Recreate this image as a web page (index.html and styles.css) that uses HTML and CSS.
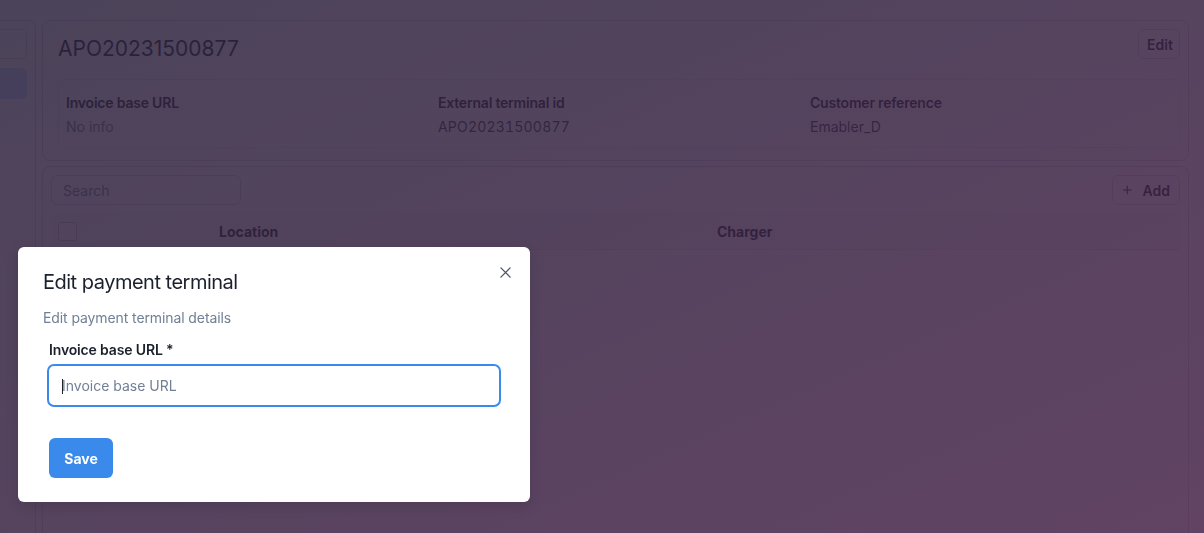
FILE: index.html
```html
<!DOCTYPE html>
<html lang="en">
<head>
<meta charset="utf-8">
<title>Edit payment terminal</title>
<link rel="stylesheet" href="styles.css">
</head>
<body>
<div class="page">
  <aside class="sidebar">
    <div class="side-item"></div>
    <div class="side-item active"></div>
  </aside>
  <main class="main">
    <section class="card details">
      <div class="card-head">
        <h1 class="title">APO20231500877</h1>
        <button class="btn-outline edit">Edit</button>
      </div>
      <dl class="fields">
        <div class="field"><dt>Invoice base URL</dt><dd class="muted">No info</dd></div>
        <div class="field"><dt>External terminal id</dt><dd class="num">APO20231500877</dd></div>
        <div class="field"><dt>Customer reference</dt><dd>Emabler_D</dd></div>
      </dl>
    </section>
    <section class="card list">
      <div class="toolbar">
        <input class="search" type="text" placeholder="Search">
        <button class="btn-outline add">
          <svg class="plus" viewBox="0 0 12 12" width="12" height="12"><path d="M6 0.5v11M0.5 6h11" stroke="currentColor" stroke-width="1.4" fill="none" stroke-linecap="round"/></svg>
          <span>Add</span>
        </button>
      </div>
      <div class="thead">
        <span class="th-check"><span class="checkbox"></span></span>
        <span class="th">Location</span>
        <span class="th">Charger</span>
      </div>
    </section>
  </main>
</div>
<div class="overlay"></div>
<div class="modal" role="dialog">
  <button class="close" aria-label="Close">
    <svg viewBox="0 0 12 12" width="12" height="12"><path d="M1 1l10 10M11 1L1 11" stroke="currentColor" stroke-width="1.4" fill="none" stroke-linecap="round"/></svg>
  </button>
  <h2 class="modal-title">Edit payment terminal</h2>
  <p class="modal-desc">Edit payment terminal details</p>
  <form class="form">
    <label class="label" for="url">Invoice base URL *</label>
    <div class="input-wrap">
      <input id="url" class="input" type="text" placeholder="Invoice base URL">
    </div>
    <button type="button" class="save">Save</button>
  </form>
</div>
</body>
</html>
```
FILE: styles.css
```css
* { box-sizing: border-box; }
html, body {
  margin: 0;
  width: 1204px;
  height: 533px;
  overflow: hidden;
  background: #ffffff;
  font-family: Inter, "Liberation Sans", sans-serif;
  color: #1a202c;
}
button, input { font-family: inherit; }

.page {
  display: flex;
  padding: 20px 15px 0 0;
  height: 533px;
  overflow: hidden;
}

.sidebar {
  width: 46px;
  margin-left: -10px;
  border: 1px solid #d3d8e0;
  border-bottom: none;
  border-radius: 8px 8px 0 0;
  padding: 8px 8px 0 0;
  display: flex;
  flex-direction: column;
  gap: 9px;
  flex-shrink: 0;
}
.side-item {
  height: 30px;
  border: 1px solid #d3d8e0;
  border-radius: 6px;
}
.side-item.active {
  height: 31px;
  border: none;
  background: #c9dcfb;
}

.main {
  flex: 1;
  min-width: 0;
  margin-left: 6px;
  display: flex;
  flex-direction: column;
  gap: 5px;
}

.card {
  border: 1px solid #d3d8e0;
  border-radius: 8px;
  background: #fff;
  padding: 8px;
}
.details { height: 141px; }
.list {
  flex: 1;
  border-bottom: none;
  border-radius: 8px 8px 0 0;
}

.card-head {
  display: flex;
  justify-content: space-between;
  align-items: flex-start;
}
.title {
  margin: 0;
  padding-left: 7px;
  font-size: 21px;
  line-height: 40px;
  font-weight: 400;
  color: #1a202c;
}
.btn-outline {
  height: 30px;
  border: 1px solid #d3d8e0;
  border-radius: 6px;
  background: #fff;
  font-size: 14px;
  font-weight: 600;
  color: #1a202c;
  display: inline-flex;
  align-items: center;
}
.edit { width: 42px; padding: 0 6px 0 8px; justify-content: center; }
.add { width: 68px; padding: 0 9px 0 10px; gap: 11px; }
.plus { display: block; }

.fields {
  margin: 10px 0 0 7px;
  height: 69px;
  border: 1px solid #eceef3;
  border-radius: 6px;
  padding: 12px 0 0 7px;
  display: grid;
  grid-template-columns: repeat(3, 372px);
  align-content: start;
}
.field dt {
  font-size: 14px;
  line-height: 22px;
  font-weight: 600;
  letter-spacing: -0.2px;
  color: #1a202c;
}
.field dd {
  margin: 2px 0 0;
  font-size: 14px;
  line-height: 22px;
  color: #2d3748;
}
.field dd.muted { color: #718096; }
.field dd.num { font-variant-numeric: tabular-nums; letter-spacing: 0.2px; }

.toolbar {
  display: flex;
  justify-content: space-between;
  align-items: center;
}
.search {
  width: 190px;
  height: 30px;
  border: 1px solid #d3d8e0;
  border-radius: 6px;
  padding: 0 11px;
  font-size: 14px;
  background: #fff;
  outline: none;
}
.search::placeholder { color: #718096; }

.thead {
  margin-top: 8px;
  height: 37px;
  display: grid;
  grid-template-columns: 168px 498px 1fr;
  align-items: center;
  background: #f4f5f8;
  border-bottom: 1px solid #e2e6ec;
}
.th-check { padding-left: 7px; display: flex; }
.checkbox {
  width: 19px;
  height: 19px;
  border: 1.5px solid #c4cbd6;
  border-radius: 3px;
  background: #fff;
}
.th {
  font-size: 14px;
  font-weight: 700;
  color: #1a202c;
}

.overlay {
  position: fixed;
  inset: 0;
  background: linear-gradient(to bottom right, rgba(43,35,60,0.85), rgba(70,34,73,0.85));
}

.modal {
  position: absolute;
  left: 18px;
  top: 247px;
  width: 512px;
  height: 255px;
  background: #fff;
  border-radius: 6px;
  box-shadow: 0 4px 14px rgba(0,0,0,0.12);
  padding: 20px 0 0;
}
.close {
  position: absolute;
  top: 9px;
  right: 9px;
  width: 32px;
  height: 32px;
  border: none;
  background: transparent;
  color: #4a5568;
  display: flex;
  align-items: center;
  justify-content: center;
  padding: 0;
}
.close svg { width: 11px; height: 11px; }
.modal-title {
  margin: 0;
  padding: 0 25px;
  font-size: 20px;
  line-height: 30px;
  font-weight: 400;
  letter-spacing: -0.5px;
  color: #1a202c;
}
.modal-desc {
  margin: 11px 0 0;
  padding: 0 25px;
  font-size: 14px;
  line-height: 20px;
  letter-spacing: -0.1px;
  color: #718096;
}
.form {
  margin: 12px 29px 0;
  display: flex;
  flex-direction: column;
  align-items: flex-start;
}
.label {
  padding-left: 2px;
  font-size: 14px;
  line-height: 20px;
  font-weight: 600;
  letter-spacing: -0.15px;
  color: #1a202c;
}
.input-wrap {
  position: relative;
  width: 100%;
  margin-top: 4px;
}
.input-wrap::after {
  content: "";
  position: absolute;
  left: 15px;
  top: 15px;
  width: 1px;
  height: 15px;
  background: #1a202c;
}
.input {
  display: block;
  width: 100%;
  height: 43px;
  border: 2px solid #3b8aeb;
  border-radius: 7px;
  padding: 0 13px;
  font-size: 14px;
  outline: none;
  background: #fff;
}
.input::placeholder { color: #718096; }
.save {
  margin: 31px 0 0 2px;
  width: 64px;
  height: 40px;
  border: none;
  border-radius: 6px;
  background: #3a8aeb;
  color: #fff;
  font-size: 14px;
  font-weight: 700;
}
```
